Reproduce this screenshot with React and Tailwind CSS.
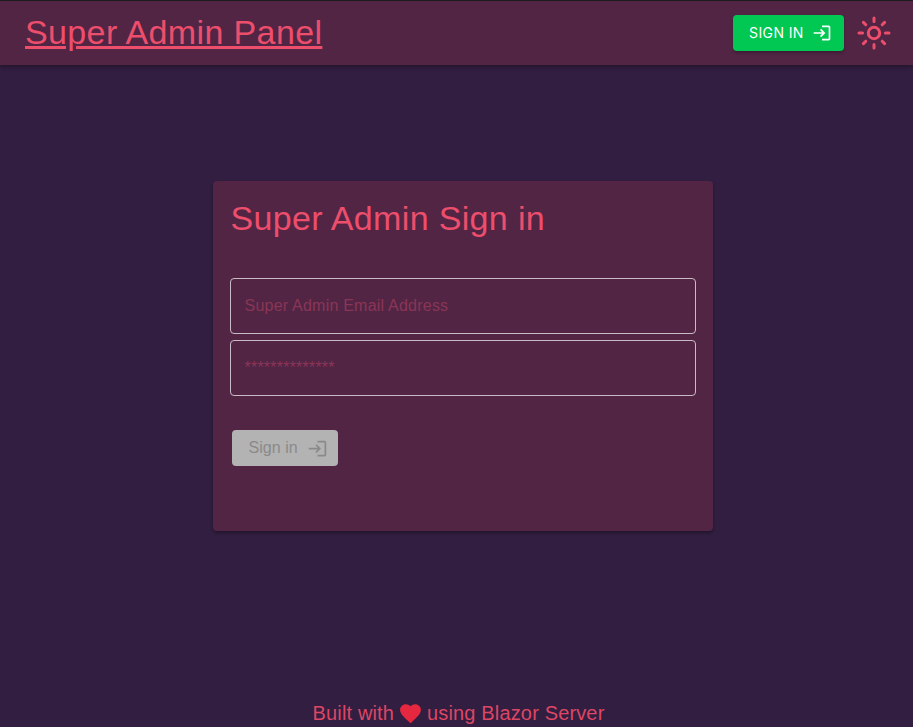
const SignInIcon = ({ className }) => (
  <svg viewBox="0 0 24 24" className={className} fill="currentColor">
    <path d="M11 7 9.6 8.4l2.6 2.6H2v2h10.2l-2.6 2.6L11 17l5-5-5-5zm9 12h-8v2h8c1.1 0 2-.9 2-2V5c0-1.1-.9-2-2-2h-8v2h8v14z" />
  </svg>
);

const SunIcon = () => (
  <svg viewBox="0 0 34 34" className="w-[34px] h-[34px]" fill="none" stroke="#ec4e6c" strokeWidth="3" strokeLinecap="round">
    <circle cx="17" cy="17" r="5.7" />
    <path d="M17 2v3.6M17 28.4V32M2 17h3.6M28.4 17H32M6.4 6.4l2.4 2.4M25.2 25.2l2.4 2.4M6.4 27.6l2.4-2.4M25.2 8.8l2.4-2.4" />
  </svg>
);

const Field = ({ placeholder }) => (
  <div className="h-14 border border-[#c9bcc5] rounded pl-[13.5px] pr-[14px] flex items-center text-base tracking-[0.22px] text-[#8a3556] bg-transparent">
    {placeholder}
  </div>
);

export default function App() {
  return (
    <div className="h-[727px] flex flex-col overflow-hidden bg-[#311e40] font-['Liberation_Sans',Arial,sans-serif]">
      <header className="h-[65px] shrink-0 border-t border-[#1c1c1c] bg-[#522545] pl-[25px] pr-[22px] flex items-center justify-between shadow-[0_2px_4px_rgba(0,0,0,0.3)]">
        <a className="-mt-[3px] text-[34px] leading-none tracking-[0.37px] text-[#ec4e6c] underline">Super Admin Panel</a>
        <div className="-mt-[1px] flex items-center gap-[13px]">
          <button className="w-[111px] h-9 rounded bg-[#00c853] text-white flex items-center justify-start pl-4 gap-[8px] text-sm tracking-[0.4px] font-['Inter',sans-serif] shadow-[0_2px_3px_rgba(0,0,0,0.25)]">
            SIGN IN
            <SignInIcon className="w-5 h-5" />
          </button>
          <SunIcon />
        </div>
      </header>

      <main className="flex-1 flex flex-col items-center pt-[116px] pl-[13px]">
        <section className="w-[500px] h-[350px] rounded bg-[#522545] px-[17px] shadow-[0_2px_3px_rgba(0,0,0,0.3)]">
          <h1 className="pt-[18px] pl-[0.5px] text-[34px] leading-[39px] tracking-[0.34px] text-[#ec4e6c]">Super Admin Sign in</h1>
          <div className="mt-[40px] flex flex-col gap-[6px]">
            <Field placeholder="Super Admin Email Address" />
            <Field placeholder="**************" />
          </div>
          <button className="mt-[34px] ml-[2px] w-[106px] h-9 rounded bg-[#b3b3b3] text-[#8a8a8a] flex items-center justify-start pl-[16.5px] gap-[9px] text-base tracking-[0.05px]">
            Sign in
            <SignInIcon className="w-[21px] h-[21px]" />
          </button>
        </section>
      </main>

      <footer className="h-[28px] shrink-0 flex items-center justify-center pl-1 gap-[4px] text-xl leading-none tracking-[0.15px] text-[#dd4665]">
        Built with
        <svg viewBox="0 0 24 24" className="w-[25px] h-[25px]" fill="#e5283f">
          <path d="m12 21.35-1.45-1.32C5.4 15.36 2 12.28 2 8.5 2 5.42 4.42 3 7.5 3c1.74 0 3.41.81 4.5 2.09C13.09 3.81 14.76 3 16.5 3 19.58 3 22 5.42 22 8.5c0 3.78-3.4 6.86-8.55 11.54L12 21.35z" />
        </svg>
        using Blazor Server
      </footer>
    </div>
  );
}
